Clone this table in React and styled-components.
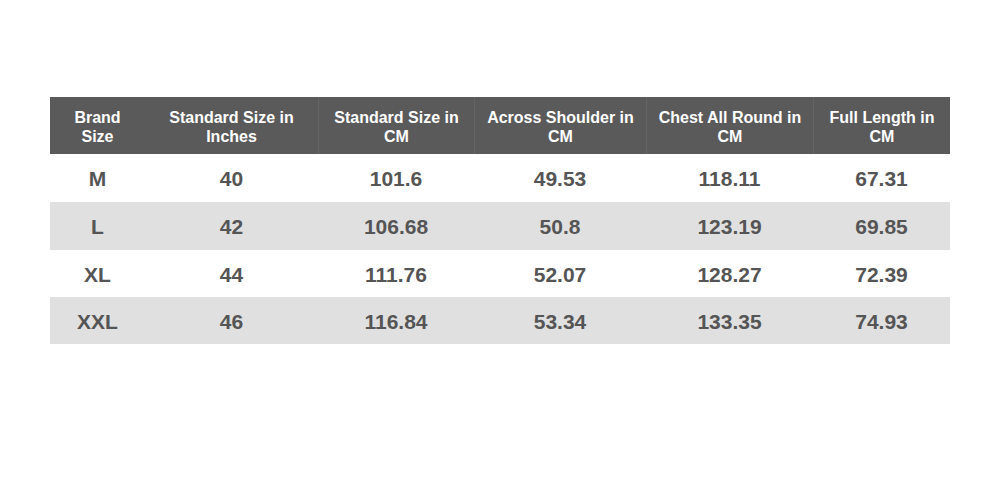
import React from 'react';
import styled, { createGlobalStyle } from 'styled-components';

const GlobalStyle = createGlobalStyle`
  body {
    margin: 0;
    background: #fff;
    font-family: "Liberation Sans", Arial, sans-serif;
  }
`;

const Page = styled.div`
  width: 1000px;
  height: 490px;
  padding: 97px 50px 0;
  box-sizing: border-box;
  background: #fff;
`;

const Grid = styled.div`
  display: grid;
  grid-template-columns: 95px 173px 156px 172px 167px 137px;
  width: 900px;
`;

const HeadCell = styled.div`
  height: 57px;
  background: #5a5a5a;
  color: #fff;
  font-size: 16px;
  font-weight: bold;
  line-height: 19px;
  display: flex;
  align-items: center;
  justify-content: center;
  text-align: center;
  padding: 3px 4px 0;
  box-sizing: border-box;
  border-left: ${p => (p.$divider ? '1px solid #646464' : 'none')};
`;

const Cell = styled.div`
  height: ${p => p.$h}px;
  background: ${p => (p.$shade ? '#e0e0e0' : '#fff')};
  color: #555;
  font-size: 21px;
  font-weight: bold;
  display: flex;
  align-items: center;
  justify-content: center;
  padding-top: 2px;
  box-sizing: border-box;
`;

const headers = [
  ['Brand', 'Size'],
  ['Standard Size in', 'Inches'],
  ['Standard Size in', 'CM'],
  ['Across Shoulder in', 'CM'],
  ['Chest All Round in', 'CM'],
  ['Full Length in', 'CM'],
];

const rows = [
  ['M', '40', '101.6', '49.53', '118.11', '67.31'],
  ['L', '42', '106.68', '50.8', '123.19', '69.85'],
  ['XL', '44', '111.76', '52.07', '128.27', '72.39'],
  ['XXL', '46', '116.84', '53.34', '133.35', '74.93'],
];

const heights = [48, 48, 47, 47];

export default function App() {
  return (
    <Page>
      <GlobalStyle />
      <Grid>
        {headers.map((h, i) => (
          <HeadCell key={i} $divider={i > 1}>
            {h[0]}
            <br />
            {h[1]}
          </HeadCell>
        ))}
        {rows.map((r, ri) =>
          r.map((v, ci) => (
            <Cell key={ri + '-' + ci} $shade={ri % 2 === 1} $h={heights[ri]}>
              {v}
            </Cell>
          ))
        )}
      </Grid>
    </Page>
  );
}
